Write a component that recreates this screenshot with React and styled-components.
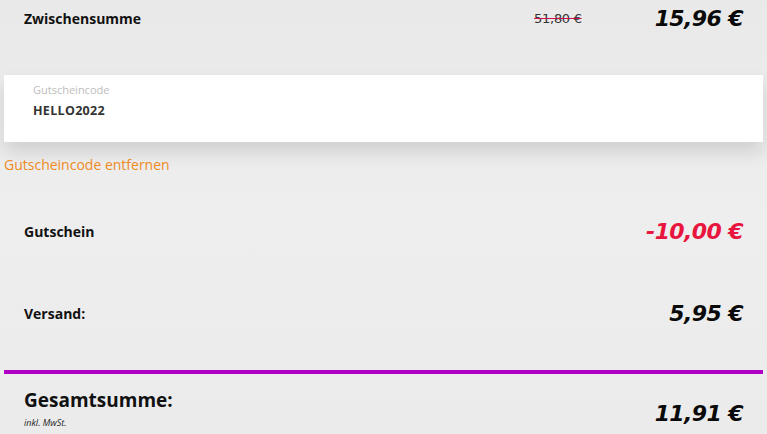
import styled, { createGlobalStyle } from "styled-components";

const GlobalStyle = createGlobalStyle`
    html, body {
        margin: 0;
        padding: 0;
        background: #ececec;
    }
    body {
        font-family: "Open Sans", "Liberation Sans", sans-serif;
        color: #111;
    }
`;

const Page = styled.div`
    width: 767px;
    height: 434px;
    overflow: hidden;
    padding: 0 4px;
    box-sizing: border-box;
    background: linear-gradient(180deg, #e9e9e9 0%, #eeeeee 50%, #ebebeb 100%);
`;

const Row = styled.div`
    display: flex;
    align-items: center;
    height: ${(props) => props.height}px;
    margin-top: ${(props) => props.offset || 0}px;
    padding: 0 20px;
`;

const Label = styled.div`
    flex: 1;
    font-size: 14px;
    font-weight: 700;
    color: #111;
`;

const OldPrice = styled.span`
    font-family: "DejaVu Sans", Verdana, sans-serif;
    font-size: 13px;
    color: #333;
    text-decoration: line-through;
    text-decoration-color: #d0104a;
    margin-right: 73px;
    letter-spacing: -0.3px;
`;

const Price = styled.span`
    font-family: "DejaVu Sans", Verdana, sans-serif;
    font-size: 22px;
    font-weight: 700;
    font-style: italic;
    letter-spacing: -0.6px;
    color: ${(props) => props.color || "#0a0a0a"};
`;

const CouponBox = styled.div`
    background: #fff;
    height: 67px;
    margin-top: 38px;
    padding: 8px 29px 0;
    box-sizing: border-box;
    box-shadow: 0 10px 18px rgba(0, 0, 0, 0.12);
`;

const FieldLabel = styled.div`
    font-size: 11px;
    color: #bdbdbd;
    line-height: 14px;
`;

const FieldValue = styled.div`
    font-size: 12.5px;
    font-weight: 700;
    color: #333;
    margin-top: 5px;
    letter-spacing: 0.3px;
`;

const RemoveLink = styled.a`
    display: block;
    margin-top: 13px;
    font-size: 14px;
    color: #ee8a1e;
    text-decoration: none;
    line-height: 20px;
    cursor: pointer;
`;

const Divider = styled.div`
    height: 4px;
    background: #b100c6;
    margin-top: 16px;
`;

const TotalRow = styled.div`
    display: flex;
    align-items: flex-start;
    padding: 13px 20px 0;
`;

const TotalLabel = styled.div`
    flex: 1;
`;

const TotalTitle = styled.div`
    font-size: 19px;
    font-weight: 700;
    line-height: 26px;
`;

const TaxNote = styled.div`
    font-size: 9px;
    font-style: italic;
    color: #222;
    margin-top: 3px;
`;

const TotalPrice = styled(Price)`
    margin-top: 14px;
`;

const App = () => {
    return (
        <>
            <GlobalStyle />
            <Page>
                <Row height={37}>
                    <Label>Zwischensumme</Label>
                    <OldPrice>51,80 €</OldPrice>
                    <Price>15,96 €</Price>
                </Row>
                <CouponBox>
                    <FieldLabel>Gutscheincode</FieldLabel>
                    <FieldValue>HELLO2022</FieldValue>
                </CouponBox>
                <RemoveLink>Gutscheincode entfernen</RemoveLink>
                <Row height={82} offset={15}>
                    <Label>Gutschein</Label>
                    <Price color="#e8163f">-10,00 €</Price>
                </Row>
                <Row height={82}>
                    <Label>Versand:</Label>
                    <Price>5,95 €</Price>
                </Row>
                <Divider />
                <TotalRow>
                    <TotalLabel>
                        <TotalTitle>Gesamtsumme:</TotalTitle>
                        <TaxNote>inkl. MwSt.</TaxNote>
                    </TotalLabel>
                    <TotalPrice>11,91 €</TotalPrice>
                </TotalRow>
            </Page>
        </>
    );
};

export default App;
